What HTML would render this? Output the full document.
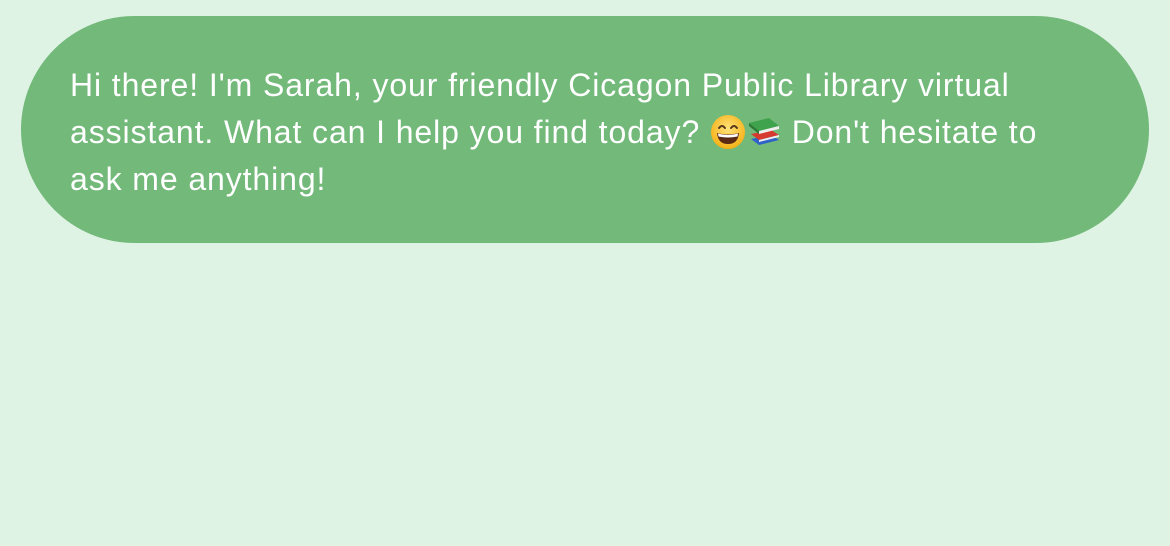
<!DOCTYPE html>
<html><head><meta charset="utf-8"><style>
html,body{margin:0;padding:0;background:#dff3e4;width:1170px;height:546px;overflow:hidden}
.b{position:absolute;left:21px;top:16px;width:1128px;height:227px;border-radius:114px;background:#72b97a}
.t{position:absolute;left:70px;top:62px;color:#fff;font-family:"Liberation Sans",sans-serif;font-size:32px;line-height:47px;white-space:nowrap;letter-spacing:0.9px}
svg{vertical-align:-7px}
</style></head><body>
<div class="b"></div>
<div class="t">Hi there! I'm Sarah, your friendly Cicagon Public Library virtual<br>assistant. What can I help you find today? <svg width="36" height="36" viewBox="0 0 36 36"><defs><radialGradient id="g" cx="50%" cy="40%" r="60%"><stop offset="0" stop-color="#ffe27a"/><stop offset="1" stop-color="#f5b014"/></radialGradient></defs><circle cx="18" cy="18" r="17" fill="url(#g)"/><path d="M9 14q3-4 6 0M21 14q3-4 6 0" stroke="#5a3a1a" stroke-width="2" fill="none" stroke-linecap="round"/><path d="M7 19q11 3 22 0q-1 11-11 11q-10 0-11-11z" fill="#5a2a14"/><path d="M8 19.5q10 3 20 0l-.5 3q-9.5 2-19 0z" fill="#fff"/></svg><svg width="36" height="36" viewBox="0 0 36 36"><path d="M5 25l20-4 8 5-20 5z" fill="#2e62c9"/><path d="M5 20l20-4 8 5-20 5z" fill="#d63a2e"/><path d="M13 26l20-5v2l-20 5z" fill="#eee"/><path d="M3 9l20-5 10 8-20 5z" fill="#3fa34d"/><path d="M13 17l20-5v3l-20 5z" fill="#eee"/><path d="M3 9l10 8v3l-10-8z" fill="#2d7a37"/></svg> Don't hesitate to<br>ask me anything!</div>
</body></html>
